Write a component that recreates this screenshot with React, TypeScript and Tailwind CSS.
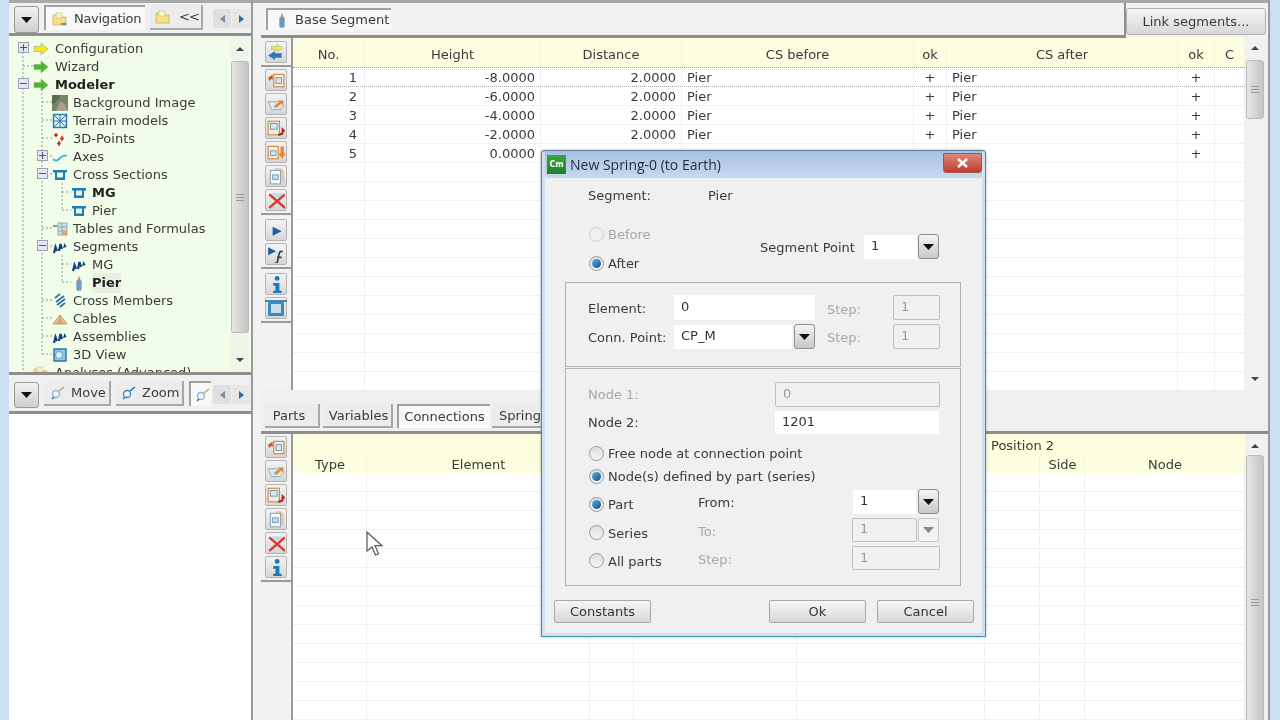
import React from "react";

// small svg icon helper, everything is drawn on a 16 unit box
const Ico = ({ children, size = 16 }: { children: React.ReactNode; size?: number }) => (
  <svg width={size} height={size} viewBox="0 0 16 16" className="shrink-0">
    {children}
  </svg>
);

const ArrowIco = ({ fill }: { fill: string }) => (
  <Ico>
    <path d="M1 5.500h7V2l7 6-7 6v-3.500H1z" fill={fill} stroke="#9aa884" strokeWidth="0.600" strokeLinejoin="round" />
  </Ico>
);
const BgIco = () => (
  <Ico>
    <rect x="0" y="0" width="16" height="16" fill="#76856a" />
    <path d="M0 0h9L4 7 0 10z" fill="#56704e" />
    <path d="M4 16 8 6l5 3 3 7z" fill="#a89e8a" />
  </Ico>
);
const TerrainIco = () => (
  <Ico>
    <rect x="1.500" y="1.500" width="13" height="13" fill="#dff0f8" stroke="#2678a8" strokeWidth="1.400" />
    <path d="M8 1v14M1 8h14M2 2l12 12M14 2 2 14" stroke="#2678a8" strokeWidth="1" />
  </Ico>
);
const PointsIco = () => (
  <Ico>
    <path d="M4 2v4M2 4h4M10 5v5M8 7.500h4M7 10v5M5 12.500h4" stroke="#d12c2c" strokeWidth="1.500" />
  </Ico>
);
const AxesIco = () => (
  <Ico>
    <path d="M1 10c3 3 5 1 7-1s4-3 7-2" fill="none" stroke="#35b8d8" strokeWidth="1.800" />
  </Ico>
);
const SectionIco = () => (
  <Ico>
    <path d="M1 3h14v2.500h-2V13H3V5.500H1z" fill="#1f7db0" />
    <rect x="5" y="5.500" width="6" height="5" fill="#e8f4f4" />
  </Ico>
);
const TablesIco = () => (
  <Ico>
    <rect x="6" y="2" width="9" height="12" fill="#cfe0ea" stroke="#7f98a8" strokeWidth="0.800" />
    <path d="M6 6h9M6 10h9M10 2v12" stroke="#7f98a8" strokeWidth="0.700" />
    <rect x="1" y="4" width="4" height="2" fill="#8a9aa8" />
    <rect x="10" y="10" width="5" height="4" fill="#e0a060" />
  </Ico>
);
const SegmentsIco = () => (
  <Ico>
    <path d="M2 14 3.500 8 5 12M7 12l1.500-7 1.500 5" fill="none" stroke="#14407c" strokeWidth="2.200" />
    <path d="M11 9l1.500-5 2 4z" fill="#14407c" />
  </Ico>
);
const PierIco = () => (
  <Ico>
    <path d="M8 0.500 9.500 5h-3z" fill="#e89030" />
    <rect x="5.500" y="5" width="5" height="10.500" rx="1.500" fill="#6a9cc8" stroke="#8aa0b8" strokeWidth="0.500" />
  </Ico>
);
const MembersIco = () => (
  <Ico>
    <path d="M3 5 8 1M4 9l8-6M5 12l8-6M8 14l5-4" stroke="#2f6fa8" strokeWidth="1.700" />
  </Ico>
);
const CablesIco = () => (
  <Ico>
    <path d="M1 13 8 4l7 9z" fill="#eac79a" stroke="#b9813f" strokeWidth="0.800" />
    <path d="M8 4v9M5 13l3-5 3 5" stroke="#b9813f" strokeWidth="0.700" fill="none" />
  </Ico>
);
const ViewIco = () => (
  <Ico>
    <rect x="2" y="2" width="12" height="12" fill="#8ec8e8" stroke="#2270a0" strokeWidth="1.400" />
    <circle cx="7" cy="8" r="3.500" fill="#e4f2f8" stroke="#5aa0c4" />
  </Ico>
);
const FolderIco = ({ arrow }: { arrow?: boolean }) => (
  <Ico>
    <path d="M1 4h5l1.500 2H14v8H1z" fill="#f6e08a" stroke="#c8a850" strokeWidth="0.700" />
    <path d="M4 2h6v5H4z" fill="#fbf3c8" stroke="#c8b468" strokeWidth="0.500" />
    {arrow && <path d="M9 12h4l-1-1.500 3 2.500-3 2.500 1-1.500H9z" fill="#5a9ad0" />}
  </Ico>
);
const MagIco = ({ blue }: { blue?: boolean }) => (
  <Ico>
    <circle cx="6" cy="9" r="3.500" fill="#eef5fa" stroke={blue ? "#3a86b8" : "#8fb2cc"} strokeWidth="1.300" />
    <path d="M9 6 14 2" stroke={blue ? "#1f6fa8" : "#c8a860"} strokeWidth="1.600" />
    <path d="M2 14l2-2" stroke="#3a6ea0" strokeWidth="1.600" />
  </Ico>
);

const SwapTool = () => (
  <Ico size={18}>
    <path d="M4 3h5V1l5 3.500L9 8V6H4z" fill="#eee36a" stroke="#b8ae50" strokeWidth="0.500" />
    <path d="M13 9H7V7L1 11l6 4v-2h6z" fill="#2d78bc" />
  </Ico>
);
const DocIn = () => (
  <Ico size={18}>
    <rect x="6" y="3" width="9" height="11" fill="#f4efe0" stroke="#d08a3c" strokeWidth="1" />
    <rect x="8" y="6" width="5" height="5" fill="#d8e8f2" stroke="#5a88a8" strokeWidth="0.700" />
    <path d="M5 3 1 6l1 3 1.500-2L5 8z" fill="#d0582a" />
  </Ico>
);
const TrayTool = () => (
  <Ico size={18}>
    <path d="M1 6h11l3 3-3 4H4z" fill="#dbe8f0" stroke="#8aa8bc" strokeWidth="0.800" />
    <path d="M6 10l5-4-1-1.500 5 .5-1 4-1-1.500-5 4z" fill="#e08a3c" />
  </Ico>
);
const DocOut = () => (
  <Ico size={18}>
    <rect x="1" y="2" width="10" height="12" fill="#f0ece0" stroke="#d08a3c" strokeWidth="1" />
    <rect x="3" y="4" width="6" height="5" fill="#d8e8f2" stroke="#5a88a8" strokeWidth="0.700" />
    <path d="M13 7l3 3-2 4-4 1v-2l3-1z" fill="#b02c20" />
  </Ico>
);
const DocDown = () => (
  <Ico size={18}>
    <rect x="1" y="3" width="9" height="11" fill="#f4efe0" stroke="#d08a3c" strokeWidth="1" />
    <rect x="3" y="7" width="5" height="4" fill="#d8e8f2" stroke="#5a88a8" strokeWidth="0.700" />
    <path d="M12 3h3v6h2l-3.500 5L10 9h2z" fill="#ea8a2a" />
  </Ico>
);
const DocPlain = () => (
  <Ico size={18}>
    <path d="M7 1h6l2 3v9h-4z" fill="#eac89a" />
    <rect x="3" y="3" width="9" height="12" fill="#f2f6f8" stroke="#8aa4b8" strokeWidth="0.900" />
    <rect x="5" y="7" width="5" height="4" fill="#c8deea" stroke="#5a88a8" strokeWidth="0.700" />
  </Ico>
);
const XTool = () => (
  <Ico size={18}>
    <path d="M5 2h8l2 4H3z" fill="#c8d8e4" />
    <path d="M2 3l14 12M16 3 2 15" stroke="#d83a34" strokeWidth="2.200" />
  </Ico>
);
const PlayTool = () => (
  <Ico size={18}>
    <path d="M5 5l8 4-8 4z" fill="#1f5f9c" />
  </Ico>
);
const PlayFTool = () => (
  <Ico size={18}>
    <path d="M1 2l7 3.500L1 9z" fill="#1f5f9c" />
    <path d="M14 6c-2-1-3 0-3.500 3L9 16H7M9 11h4" fill="none" stroke="#33414c" strokeWidth="1.500" />
  </Ico>
);
const InfoTool = () => (
  <Ico size={18}>
    <circle cx="9" cy="3" r="2.200" fill="#1c7ab8" />
    <path d="M5.500 7H11v7h2v2.500H5.500V14h2V9.500h-2z" fill="#1c7ab8" />
  </Ico>
);
const BeamTool = () => (
  <svg width="22" height="22" viewBox="0 0 22 22" className="shrink-0">
    <path d="M0 3h22v2h-3v14H3V5H0z" fill="#3f88b8" />
    <rect x="6" y="7" width="10" height="9" fill="#c4dcec" />
  </svg>
);

const SideBtn = ({ children }: { children: React.ReactNode }) => (
  <div className="flex h-[22px] w-[22px] items-center justify-center rounded-[2px] border border-[#b4b4b4] bg-gradient-to-b from-[#f4f4f4] to-[#d6d6d6]">
    {children}
  </div>
);

const Grip = () => (
  <div className="flex w-[8px] flex-col gap-[2px]">
    <span className="h-px bg-[#999]" />
    <span className="h-px bg-[#999]" />
    <span className="h-px bg-[#999]" />
  </div>
);

const UpArrow = ({ className }: { className: string }) => (
  <svg width="10" height="6" viewBox="0 0 10 6" className={className}>
    <path d="M1 5 5 1l4 4z" fill="#444" />
  </svg>
);

const DownArrow = ({ className }: { className: string }) => (
  <svg width="10" height="6" viewBox="0 0 10 6" className={className}>
    <path d="M1 1 5 5l4-4z" fill="#444" />
  </svg>
);

const SmallArrows = ({ className }: { className: string }) => (
  <div className={className}>
    <div className="flex h-[19px] w-[18px] items-center justify-center rounded-[2px] bg-[#dfdfdf]">
      <svg width="5" height="8" viewBox="0 0 5 8">
        <path d="M5 0v8L0 4z" fill="#6f8fb0" />
      </svg>
    </div>
    <div className="flex h-[19px] w-[18px] items-center justify-center rounded-[2px] bg-[#e6e6e6]">
      <svg width="5" height="8" viewBox="0 0 5 8">
        <path d="M0 0v8l5-4z" fill="#2f6aa0" />
      </svg>
    </div>
  </div>
);

const MenuBtn = ({ className }: { className: string }) => (
  <div className={className}>
    <svg width="11" height="6" viewBox="0 0 11 6">
      <path d="M0 0h11L5.500 6z" fill="#111" />
    </svg>
  </div>
);

const ComboBtn = ({ off }: { off?: boolean }) =>
  off ? (
    <div className="flex h-[24px] w-[21px] items-center justify-center rounded-[2px] border border-[#c8c8c8] bg-[#f2f2f2]">
      <svg width="11" height="6" viewBox="0 0 11 6">
        <path d="M0 0h11L5.500 6z" fill="#888" />
      </svg>
    </div>
  ) : (
    <div className="flex h-[25px] w-[21px] items-center justify-center rounded-[3px] border border-[#8f8f8f] bg-gradient-to-b from-[#f4f4f4] to-[#c8c8c8]">
      <svg width="11" height="6" viewBox="0 0 11 6">
        <path d="M0 0h11L5.500 6z" fill="#111" />
      </svg>
    </div>
  );

const Radio = ({ on, off }: { on?: boolean; off?: boolean }) => (
  <span
    className={
      off
        ? "flex h-[15px] w-[15px] shrink-0 rounded-full border border-[#cfcfcf] bg-[#efefef]"
        : "flex h-[15px] w-[15px] shrink-0 items-center justify-center rounded-full border border-[#9a9a9a] bg-gradient-to-b from-[#dedede] to-[#f6f6f6]"
    }
  >
    {on && <span className="h-[9px] w-[9px] rounded-full bg-gradient-to-br from-[#5fb4e4] to-[#0c4f86]" />}
  </span>
);

const tree = [
  { label: "Configuration", level: 0, icon: <ArrowIco fill="#f4e62a" />, exp: "+" },
  { label: "Wizard", level: 0, icon: <ArrowIco fill="#45b82e" /> },
  { label: "Modeler", level: 0, icon: <ArrowIco fill="#45b82e" />, exp: "-", bold: true },
  { label: "Background Image", level: 1, icon: <BgIco /> },
  { label: "Terrain models", level: 1, icon: <TerrainIco /> },
  { label: "3D-Points", level: 1, icon: <PointsIco /> },
  { label: "Axes", level: 1, icon: <AxesIco />, exp: "+" },
  { label: "Cross Sections", level: 1, icon: <SectionIco />, exp: "-" },
  { label: "MG", level: 2, icon: <SectionIco />, bold: true },
  { label: "Pier", level: 2, icon: <SectionIco /> },
  { label: "Tables and Formulas", level: 1, icon: <TablesIco /> },
  { label: "Segments", level: 1, icon: <SegmentsIco />, exp: "-" },
  { label: "MG", level: 2, icon: <SegmentsIco /> },
  { label: "Pier", level: 2, icon: <PierIco />, bold: true, sel: true },
  { label: "Cross Members", level: 1, icon: <MembersIco /> },
  { label: "Cables", level: 1, icon: <CablesIco /> },
  { label: "Assemblies", level: 1, icon: <SegmentsIco /> },
  { label: "3D View", level: 1, icon: <ViewIco /> },
  { label: "Analyses (Advanced)", level: 0, icon: <FolderIco /> },
];

const levelPad = ["pl-[24px]", "pl-[43px]", "pl-[62px]"];
const levelExp = ["left-[9px]", "left-[28px]", "left-[47px]"];
const levelGap = ["ml-[6px]", "ml-[5px]", "ml-[5px]"];

// tree guide lines, coordinates are relative to the tree panel
const guides = [
  "M14 12V336", "M14 30H25", "M33 57V318",
  "M33 66H43", "M33 84H43", "M33 102H43", "M33 120H43", "M33 138H43", "M33 192H43", "M33 210H43", "M33 264H43", "M33 282H43", "M33 300H43", "M33 318H43",
  "M53 147V174", "M53 156H62", "M53 174H62", "M53 219V246", "M53 228H62", "M53 246H62",
];

const topCols = ["w-[72px]", "w-[176px]", "w-[141px]", "w-[232px]", "w-[33px]", "w-[231px]", "w-[37px]", "w-[30px]"];
const topHead = ["No.", "Height", "Distance", "CS before", "ok", "CS after", "ok", "C"];
const topRows = [
  ["1", "-8.0000", "2.0000", "Pier", "+", "Pier", "+", ""],
  ["2", "-6.0000", "2.0000", "Pier", "+", "Pier", "+", ""],
  ["3", "-4.0000", "2.0000", "Pier", "+", "Pier", "+", ""],
  ["4", "-2.0000", "2.0000", "Pier", "+", "Pier", "+", ""],
  ["5", "0.0000", "", "", "", "", "+", ""],
  ...Array.from({ length: 12 }, () => ["", "", "", "", "", "", "", ""]),
];
const topAlign = ["justify-end pr-[7px]", "justify-end pr-[5px]", "justify-end pr-[5px]", "justify-start pl-[5px]", "justify-center", "justify-start pl-[5px]", "justify-center", "justify-center"];

const botCols = ["w-[74px]", "w-[223px]", "w-[44px]", "w-[163px]", "w-[188px]", "w-[55px]", "w-[45px]", "w-[160px]"];
const botHead = ["Type", "Element", "", "", "", "", "Side", "Node"];

const TabBtn = ({ label, className }: { label: string; className: string }) => (
  <div className={className}>{label}</div>
);

const InputBox = ({ value, className }: { value: string; className: string }) => (
  <div className={className}>{value}</div>
);

const inputOn = "flex items-center bg-white pl-[7px] pb-[2px] text-[#333]";
const inputOff = "flex items-center rounded-[2px] border border-[#bdbdbd] bg-[#f0f0f0] pl-[7px] pb-[2px] text-[#9a9a9a]";
const dlgBtn = "flex h-[23px] w-[97px] items-center justify-center rounded-[2px] border border-[#a8a8a8] bg-gradient-to-b from-[#f6f6f6] to-[#d8d8d8] text-[#333]";

export default function App() {
  return (
    <div className="relative flex h-[720px] w-[1280px] overflow-hidden bg-[#cfdff2] pl-[9px] font-['DejaVu_Sans',sans-serif] text-[13px] text-[#3a3a3a] blur-[0.5px]">
      {/* left column */}
      <div className="flex h-full w-[244px] flex-col border-r-2 border-[#9a9a9a] bg-[#f0f0f0]">
        <div className="flex h-[36px] shrink-0 items-start border-y-[3px] border-t-[#a8a8a8] border-b-[#8e8e8e] pl-[5px]">
          <MenuBtn className="mt-[3px] flex h-[27px] w-[25px] items-center justify-center rounded-[3px] border border-[#9a9a9a] bg-gradient-to-b from-[#f2f2f2] to-[#cfcfcf]" />
          <div className="ml-[5px] mt-[2px] flex h-[25px] w-[101px] items-center gap-[6px] border-l-2 border-t-2 border-[#a0a0a0] bg-[#f8f8f8] pl-[6px]">
            <FolderIco arrow />
            <span className="tracking-[-0.3px]">Navigation</span>
          </div>
          <div className="ml-[5px] mt-[2px] flex h-[25px] w-[53px] items-center gap-[8px] border-b-2 border-r-2 border-[#a8a8a8] bg-[#ececec] pl-[5px]">
            <FolderIco />
            <span className="tracking-[-1px]">&lt;&lt;</span>
          </div>
          <SmallArrows className="ml-[10px] mt-[6px] flex gap-px" />
        </div>

        <div className="relative flex h-[336px] shrink-0 overflow-hidden bg-[#f1fde9]">
          <svg width="230" height="336" className="absolute left-0 top-0">
            {guides.map((d) => (
              <path key={d} d={d} stroke="#9a9a9a" strokeWidth="1" strokeDasharray="2 2" fill="none" />
            ))}
          </svg>
          <div className="relative flex-1 pt-[4px]">
            {tree.map((row, i) => (
              <div key={i} className={`relative flex h-[18px] items-center ${levelPad[row.level]}`}>
                {row.exp && (
                  <span className={`absolute top-[2px] flex h-[11px] w-[11px] items-center justify-center border border-[#9aa0b4] bg-[#e4e6f0] ${levelExp[row.level]}`}>
                    <svg width="7" height="7" viewBox="0 0 7 7">
                      <path d={row.exp === "+" ? "M0 3.500h7M3.500 0v7" : "M0 3.500h7"} stroke="#50507c" strokeWidth="1" />
                    </svg>
                  </span>
                )}
                <span className="flex w-[16px] items-center justify-center">{row.icon}</span>
                <span
                  className={`${levelGap[row.level]} whitespace-nowrap ${row.bold ? "font-bold text-[#222]" : ""} ${row.sel ? "bg-[#e8f0e2]" : ""}`}
                >
                  {row.label}
                </span>
              </div>
            ))}
          </div>
          <div className="mr-[2px] flex h-full w-[18px] shrink-0 flex-col items-center justify-between bg-[#eef6ea] pb-[9px]">
            <div className="flex w-full flex-col items-center">
              <UpArrow className="mt-[10px]" />
              <div className="mt-[9px] flex h-[272px] w-[18px] items-center justify-center rounded-[3px] border border-[#bbb] bg-gradient-to-r from-[#e6e6e6] to-[#c4c4c4]">
                <Grip />
              </div>
            </div>
            <DownArrow className="" />
          </div>
        </div>

        <div className="flex h-[42px] shrink-0 items-start border-y-[3px] border-[#8e8e8e] pl-[5px]">
          <MenuBtn className="mt-[7px] flex h-[26px] w-[25px] items-center justify-center rounded-[3px] border border-[#9a9a9a] bg-gradient-to-b from-[#f2f2f2] to-[#cfcfcf]" />
          <div className="ml-[5px] mt-[6px] flex h-[25px] w-[67px] items-center gap-[5px] border-b-2 border-r-2 border-[#a8a8a8] bg-[#ececec] pl-[6px]">
            <MagIco />
            <span>Move</span>
          </div>
          <div className="ml-[5px] mt-[6px] flex h-[25px] w-[68px] items-center gap-[5px] border-b-2 border-r-2 border-[#a8a8a8] bg-[#ececec] pl-[5px]">
            <MagIco blue />
            <span>Zoom</span>
          </div>
          <div className="ml-[5px] mt-[6px] flex h-[25px] w-[22px] items-center border-l-2 border-t-2 border-[#a0a0a0] bg-[#f8f8f8] pl-[4px]">
            <MagIco />
          </div>
          <SmallArrows className="ml-[2px] mt-[10px] flex gap-px" />
        </div>

        <div className="flex-1 bg-white" />
      </div>

      {/* right column */}
      <div className="flex h-full w-[1017px] flex-col border-r-2 border-[#9a9a9a] bg-[#f2f2f2] pl-[8px]">
        <div className="-ml-[8px] h-[3px] shrink-0 bg-[#a8a8a8]" />
        <div className="flex h-[35px] shrink-0 items-start">
          <div className="h-full w-[865px] border-b-[3px] border-r-2 border-[#8e8e8e] pl-[5px] pt-[5px]">
            <div className="flex h-[22px] w-[125px] items-center gap-[5px] border-l-2 border-t-2 border-[#a0a0a0] bg-[#f8f8f8] pl-[6px]">
              <PierIco />
              <span className="whitespace-nowrap">Base Segment</span>
            </div>
          </div>
          <div className="mt-[5px] flex h-[27px] w-[140px] items-center justify-center rounded-[3px] border border-[#b0b0b0] bg-gradient-to-b from-[#f4f4f4] to-[#d8d8d8]">
            Link segments...
          </div>
        </div>

        {/* upper table */}
        <div className="flex h-[352px] shrink-0">
          <div className="flex w-[32px] shrink-0 flex-col border-r-2 border-[#9a9a9a]">
            <div className="flex flex-col border-b-2 border-[#9a9a9a] pb-[2px] pl-[4px] pt-[3px]">
              <SideBtn><SwapTool /></SideBtn>
            </div>
            <div className="flex flex-col gap-[2px] border-b-2 border-[#9a9a9a] pb-[2px] pl-[4px] pt-[2px]">
              <SideBtn><DocIn /></SideBtn>
              <SideBtn><TrayTool /></SideBtn>
              <SideBtn><DocOut /></SideBtn>
              <SideBtn><DocDown /></SideBtn>
              <SideBtn><DocPlain /></SideBtn>
              <SideBtn><XTool /></SideBtn>
            </div>
            <div className="flex flex-col gap-[2px] border-b-2 border-[#9a9a9a] pb-[2px] pl-[4px] pt-[4px]">
              <SideBtn><PlayTool /></SideBtn>
              <SideBtn><PlayFTool /></SideBtn>
            </div>
            <div className="flex flex-col gap-[2px] border-b-2 border-[#9a9a9a] pb-[2px] pl-[4px] pt-[4px]">
              <SideBtn><InfoTool /></SideBtn>
              <SideBtn><BeamTool /></SideBtn>
            </div>
          </div>
          <div className="h-full w-[952px] shrink-0 overflow-hidden bg-white">
            <div className="flex h-[30px] border-b border-dotted border-[#999] bg-[#fdfde0] pt-[5px] pb-px">
              {topHead.map((h, i) => (
                <div key={i} className={`flex items-center justify-center border-r border-[#f4f4d8] ${topCols[i]}`}>
                  {h}
                </div>
              ))}
            </div>
            {topRows.map((row, r) => (
              <div key={r} className={`flex h-[19px] border-b ${r === 0 ? "border-dotted border-[#aaa]" : "border-[#f1f1f1]"}`}>
                {row.map((c, i) => (
                  <div key={i} className={`flex items-center border-r border-[#f1f1f1] pt-px ${topCols[i]} ${topAlign[i]}`}>
                    {c}
                  </div>
                ))}
              </div>
            ))}
          </div>
          <div className="flex h-full w-[20px] shrink-0 flex-col items-center justify-between bg-[#f1f1f1] pb-[7px] pt-[7px]">
            <div className="flex w-full flex-col items-center">
              <UpArrow className="" />
              <div className="mt-[9px] flex h-[59px] w-[18px] items-center justify-center rounded-[3px] border border-[#bbb] bg-gradient-to-r from-[#e6e6e6] to-[#c4c4c4]">
                <Grip />
              </div>
            </div>
            <DownArrow className="mb-[1px]" />
          </div>
        </div>

        {/* lower tabs */}
        <div className="flex h-[44px] shrink-0 items-end border-b-[3px] border-[#8e8e8e] bg-[#efefef] pb-[3px] pl-[4px]">
          <TabBtn label="Parts" className="flex h-[24px] w-[55px] items-center justify-center border-b-2 border-r-2 border-[#a8a8a8] bg-[#ececec] pr-[5px] pt-[2px]" />
          <TabBtn label="Variables" className="ml-[3px] flex h-[24px] w-[70px] items-center justify-center border-b-2 border-r-2 border-[#a8a8a8] bg-[#ececec] pl-[3px] pt-[2px]" />
          <TabBtn label="Connections" className="ml-[4px] flex h-[24px] w-[93px] items-center justify-center border-l-2 border-t-2 border-[#a0a0a0] bg-[#f8f8f8]" />
          <TabBtn label="Spring" className="ml-[2px] flex h-[24px] w-[60px] items-center border-b-2 border-r-2 border-[#a8a8a8] bg-[#ececec] pl-[7px] pt-[2px]" />
        </div>

        {/* lower table */}
        <div className="flex min-h-0 flex-1">
          <div className="flex w-[32px] shrink-0 flex-col border-r-2 border-[#9a9a9a]">
            <div className="flex flex-col gap-[2px] border-b-2 border-[#9a9a9a] pb-[2px] pl-[4px] pt-[2px]">
              <SideBtn><DocIn /></SideBtn>
              <SideBtn><TrayTool /></SideBtn>
              <SideBtn><DocOut /></SideBtn>
              <SideBtn><DocPlain /></SideBtn>
              <SideBtn><XTool /></SideBtn>
              <SideBtn><InfoTool /></SideBtn>
            </div>
          </div>
          <div className="h-full w-[952px] shrink-0 overflow-hidden bg-white">
            <div className="flex h-[20px] items-center bg-[#fdfde0] pl-[698px] pt-[3px]">Position 2</div>
            <div className="flex h-[19px] bg-[#fdfde0] pt-[2px]">
              {botHead.map((h, i) => (
                <div key={i} className={`flex items-center justify-center border-r border-[#f4f4d8] pl-px ${botCols[i]}`}>
                  {h}
                </div>
              ))}
            </div>
            {Array.from({ length: 14 }, (_, r) => (
              <div key={r} className="flex h-[19px] border-b border-[#f1f1f1]">
                {botCols.map((w, i) => (
                  <div key={i} className={`border-r border-[#f1f1f1] ${w}`} />
                ))}
              </div>
            ))}
          </div>
          <div className="flex h-full w-[20px] shrink-0 flex-col items-center overflow-hidden bg-[#f1f1f1]">
            <UpArrow className="mt-[9px] shrink-0" />
            <div className="mt-[6px] flex h-[296px] w-[18px] shrink-0 items-start justify-center rounded-[3px] border border-[#bbb] bg-gradient-to-r from-[#e6e6e6] to-[#c4c4c4] pt-[143px]">
              <Grip />
            </div>
          </div>
        </div>
      </div>

      {/* mouse pointer */}
      <svg width="18" height="26" viewBox="0 0 18 26" className="absolute left-[366px] top-[531px]">
        <path d="M1 1v19l5-4 3.500 8 3-1.300-3.500-8H16z" fill="#fff" stroke="#555" strokeWidth="1.200" />
      </svg>

      {/* dialog */}
      <div className="absolute left-[541px] top-[150px] flex h-[487px] w-[445px] flex-col rounded-t-[4px] border border-[#5f7f96] border-b-[#3f98ac] border-r-[#4f8aa4] bg-[#cfe0f0] px-[3px] pb-[3px] shadow-[0_0_3px_rgba(0,0,0,0.3)]">
        <div className="flex h-[27px] shrink-0 items-center bg-gradient-to-b from-[#a4c2e2] to-[#c6d9ee]">
          <div className="ml-[2px] flex h-[19px] w-[19px] items-center justify-center bg-gradient-to-b from-[#3aa83a] to-[#1f7f2a] text-[8px] font-bold text-white">
            Cm
          </div>
          <span className="ml-[4px] font-['Open_Sans',sans-serif] text-[14px] text-[#1c2c3c]">New Spring-0 (to Earth)</span>
          <div className="ml-auto mb-[4px] flex h-[20px] w-[39px] items-center justify-center rounded-b-[3px] border border-[#a05a50] bg-gradient-to-b from-[#d88a7c] to-[#c0392b]">
            <svg width="11" height="10" viewBox="0 0 11 10">
              <path d="M1 1l9 8M10 1 1 9" stroke="#fff" strokeWidth="2.400" />
            </svg>
          </div>
        </div>

        <div className="flex min-h-0 flex-1 flex-col bg-[#f0f0f0]">
          <div className="mt-[9px] flex h-[18px] items-center pl-[43px]">
            <span className="w-[120px]">Segment:</span>
            <span>Pier</span>
          </div>

          <div className="mt-[20px] flex h-[47px]">
            <div className="flex w-[215px] flex-col gap-[11px] pl-[44px]">
              <label className="flex h-[18px] items-center gap-[4px] text-[#a8a8a8]">
                <Radio off />
                <span className="pt-[2px]">Before</span>
              </label>
              <label className="flex h-[18px] items-center gap-[4px]">
                <Radio on />
                <span className="pt-[2px]">After</span>
              </label>
            </div>
            <div className="mt-[9px] flex h-[25px] items-center">
              <span className="w-[104px] pt-[2px]">Segment Point</span>
              <InputBox value="1" className={`h-[24px] w-[53px] ${inputOn}`} />
              <span className="ml-px"><ComboBtn /></span>
            </div>
          </div>

          <div className="ml-[20px] mt-[10px] h-[85px] w-[396px] border border-[#b0b0b0] pl-[22px] pt-[12px]">
            <div className="flex h-[25px] items-center">
              <span className="w-[86px] pt-[2px]">Element:</span>
              <InputBox value="0" className={`h-[25px] w-[141px] ${inputOn}`} />
              <span className="ml-[12px] w-[66px] pt-[4px] text-[#a8a8a8]">Step:</span>
              <InputBox value="1" className={`h-[25px] w-[47px] ${inputOff}`} />
            </div>
            <div className="mt-[4px] flex h-[25px] items-center">
              <span className="w-[86px] pt-[2px]">Conn. Point:</span>
              <InputBox value="CP_M" className={`h-[24px] w-[118px] ${inputOn}`} />
              <span className="ml-[2px]"><ComboBtn /></span>
              <span className="ml-[12px] w-[66px] pt-[2px] text-[#a8a8a8]">Step:</span>
              <InputBox value="1" className={`h-[25px] w-[47px] ${inputOff}`} />
            </div>
          </div>

          <div className="ml-[20px] mt-px h-[218px] w-[396px] border border-[#b0b0b0] pl-[22px] pt-[13px]">
            <div className="flex h-[25px] items-center">
              <span className="w-[187px] text-[#a8a8a8]">Node 1:</span>
              <InputBox value="0" className={`h-[25px] w-[165px] ${inputOff}`} />
            </div>
            <div className="mt-[4px] flex h-[23px] items-center">
              <span className="w-[187px]">Node 2:</span>
              <InputBox value="1201" className={`h-[23px] w-[164px] ${inputOn}`} />
            </div>
            <label className="mt-[10px] flex h-[18px] items-center gap-[4px] pl-px">
              <Radio />
              <span className="pt-[2px]">Free node at connection point</span>
            </label>
            <label className="mt-[5px] flex h-[18px] items-center gap-[4px] pl-px">
              <Radio on />
              <span className="pt-[2px]">Node(s) defined by part (series)</span>
            </label>
            <div className="mt-[4px] flex h-[25px] items-center">
              <label className="flex w-[110px] items-center gap-[4px] pl-px pt-[5px]">
                <Radio on />
                <span className="pt-[2px]">Part</span>
              </label>
              <span className="w-[155px] pt-[2px]">From:</span>
              <InputBox value="1" className={`h-[24px] w-[63px] ${inputOn}`} />
              <span className="ml-[2px]"><ComboBtn /></span>
            </div>
            <div className="mt-[4px] flex h-[24px] items-center">
              <label className="flex w-[110px] items-center gap-[4px] pl-px pt-[5px]">
                <Radio />
                <span className="pt-[2px]">Series</span>
              </label>
              <span className="w-[154px] pt-[4px] text-[#a8a8a8]">To:</span>
              <InputBox value="1" className={`h-[24px] w-[65px] ${inputOff}`} />
              <span className="ml-px"><ComboBtn off /></span>
            </div>
            <div className="mt-[4px] flex h-[24px] items-center">
              <label className="flex w-[110px] items-center gap-[4px] pl-px pt-[5px]">
                <Radio />
                <span className="pt-[2px]">All parts</span>
              </label>
              <span className="w-[154px] pt-[4px] text-[#a8a8a8]">Step:</span>
              <InputBox value="1" className={`h-[24px] w-[88px] pt-[2px] ${inputOff}`} />
            </div>
          </div>

          <div className="mt-[14px] flex justify-between pl-[9px] pr-[8px]">
            <div className={dlgBtn}>Constants</div>
            <div className="flex gap-[11px]">
              <div className={dlgBtn}>Ok</div>
              <div className={dlgBtn}>Cancel</div>
            </div>
          </div>
        </div>
      </div>
    </div>
  );
}
